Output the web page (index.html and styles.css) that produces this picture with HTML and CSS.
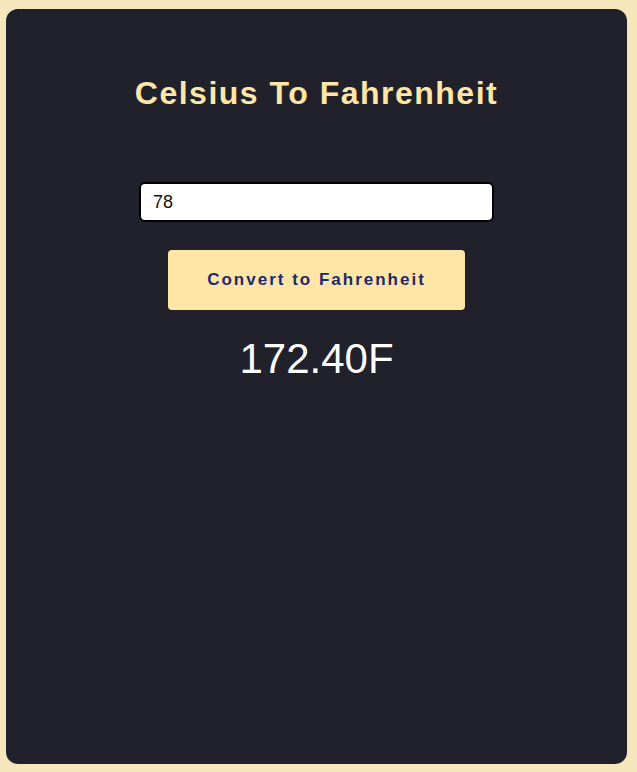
FILE: index.html
```html
<!DOCTYPE html>
<html lang="en">
<head>
<meta charset="utf-8">
<title>Celsius To Fahrenheit</title>
<link rel="stylesheet" href="styles.css">
</head>
<body>
  <main class="card">
    <h1 class="title">Celsius To Fahrenheit</h1>
    <input class="field" type="text" value="78">
    <button class="convert" type="button">Convert to Fahrenheit</button>
    <p class="result">172.40F</p>
  </main>
</body>
</html>
```

FILE: styles.css
```css
* { box-sizing: border-box; }
html, body { height: 100%; }
body {
  margin: 0;
  padding: 9px 10px 8px 6px;
  background: #f5e6bc;
  font-family: "Liberation Sans", Arial, sans-serif;
}
.card {
  height: 100%;
  background: #21212b;
  border-radius: 12px;
  display: flex;
  flex-direction: column;
  align-items: center;
  padding-top: 66px;
}
.title {
  margin: 0;
  font-size: 32px;
  line-height: 37px;
  font-weight: bold;
  letter-spacing: 1.5px;
  color: #ffe6a7;
}
.field {
  margin-top: 70px;
  width: 355px;
  height: 40px;
  border: 2px solid #000;
  border-radius: 6px;
  background: #fff;
  padding: 0 12px;
  font-family: "Liberation Sans", Arial, sans-serif;
  font-size: 18px;
  color: #111;
  outline: none;
}
.convert {
  margin-top: 28px;
  width: 297px;
  height: 60px;
  border: none;
  border-radius: 4px;
  background: #ffe6a7;
  color: #1b2a6b;
  font-family: "Liberation Sans", Arial, sans-serif;
  font-size: 17px;
  font-weight: bold;
  letter-spacing: 2px;
}
.result {
  margin: 25px 0 0;
  font-size: 42px;
  line-height: 48px;
  color: #fff;
}
```
